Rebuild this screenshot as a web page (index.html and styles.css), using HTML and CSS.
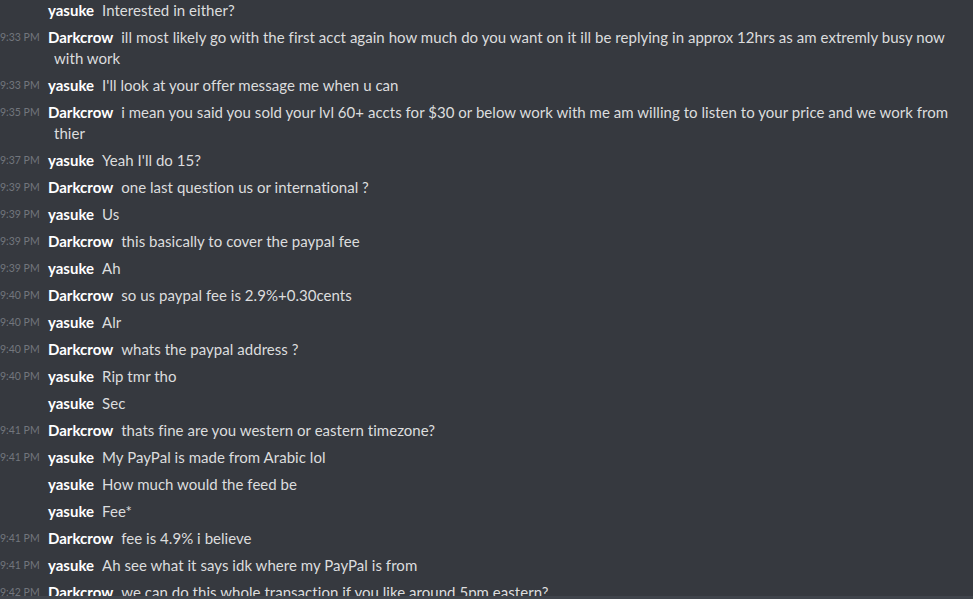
FILE: index.html
```html
<!DOCTYPE html>
<html>
<head>
<meta charset="utf-8">
<link rel="stylesheet" href="styles.css">
</head>
<body>
<div class="app">
  <div class="chat">
    <div class="list">
      <div class="msg"><span class="time"></span><span class="user">yasuke</span><span class="text">Interested in either?</span></div>
      <div class="msg"><span class="time">9:33 PM</span><span class="user">Darkcrow</span><span class="text">ill most likely go with the first acct again how much do you want on it ill be replying in approx 12hrs as am extremly busy now with work</span></div>
      <div class="msg"><span class="time">9:33 PM</span><span class="user">yasuke</span><span class="text">I'll look at your offer message me when u can</span></div>
      <div class="msg"><span class="time">9:35 PM</span><span class="user">Darkcrow</span><span class="text">i mean you said you sold your lvl 60+ accts for $30 or below work with me am willing to listen to your price and we work from thier</span></div>
      <div class="msg"><span class="time">9:37 PM</span><span class="user">yasuke</span><span class="text">Yeah I'll do 15?</span></div>
      <div class="msg"><span class="time">9:39 PM</span><span class="user">Darkcrow</span><span class="text">one last question us or international ?</span></div>
      <div class="msg"><span class="time">9:39 PM</span><span class="user">yasuke</span><span class="text">Us</span></div>
      <div class="msg"><span class="time">9:39 PM</span><span class="user">Darkcrow</span><span class="text">this basically to cover the paypal fee</span></div>
      <div class="msg"><span class="time">9:39 PM</span><span class="user">yasuke</span><span class="text">Ah</span></div>
      <div class="msg"><span class="time">9:40 PM</span><span class="user">Darkcrow</span><span class="text">so us paypal fee is 2.9%+0.30cents</span></div>
      <div class="msg"><span class="time">9:40 PM</span><span class="user">yasuke</span><span class="text">Alr</span></div>
      <div class="msg"><span class="time">9:40 PM</span><span class="user">Darkcrow</span><span class="text">whats the paypal address ?</span></div>
      <div class="msg"><span class="time">9:40 PM</span><span class="user">yasuke</span><span class="text">Rip tmr tho</span></div>
      <div class="msg"><span class="time"></span><span class="user">yasuke</span><span class="text">Sec</span></div>
      <div class="msg"><span class="time">9:41 PM</span><span class="user">Darkcrow</span><span class="text">thats fine are you western or eastern timezone?</span></div>
      <div class="msg"><span class="time">9:41 PM</span><span class="user">yasuke</span><span class="text">My PayPal is made from Arabic lol</span></div>
      <div class="msg"><span class="time"></span><span class="user">yasuke</span><span class="text">How much would the feed be</span></div>
      <div class="msg"><span class="time"></span><span class="user">yasuke</span><span class="text">Fee*</span></div>
      <div class="msg"><span class="time">9:41 PM</span><span class="user">Darkcrow</span><span class="text">fee is 4.9% i believe</span></div>
      <div class="msg"><span class="time">9:41 PM</span><span class="user">yasuke</span><span class="text">Ah see what it says idk where my PayPal is from</span></div>
      <div class="msg"><span class="time">9:42 PM</span><span class="user">Darkcrow</span><span class="text">we can do this whole transaction if you like around 5pm eastern?</span></div>
    </div>
  </div>
  <div class="bar"></div>
</div>
</body>
</html>
```

FILE: styles.css
```css
html, body {
  margin: 0;
  padding: 0;
  background: #36393f;
}
.app {
  width: 973px;
  height: 599px;
  display: flex;
  flex-direction: column;
  overflow: hidden;
}
.chat {
  flex: 1;
  overflow: hidden;
}
.list {
  margin-top: -3px;
  padding-right: 14px;
}
.msg {
  font-family: Lato, "Open Sans", sans-serif;
  font-size: 15px;
  line-height: 21px;
  padding: 3px 0;
  padding-left: 54px;
  text-indent: -54px;
  color: #dcddde;
}
.time {
  display: inline-block;
  width: 38px;
  margin-right: 10px;
  text-indent: 0;
  text-align: right;
  white-space: nowrap;
  font-size: 10.5px;
  color: #72767d;
  vertical-align: top;
}
.user {
  color: #ffffff;
  font-weight: 700;
  margin-right: 8px;
}
.text {
  letter-spacing: 0.04px;
}
.bar {
  height: 3px;
  background: #40444b;
}
```
